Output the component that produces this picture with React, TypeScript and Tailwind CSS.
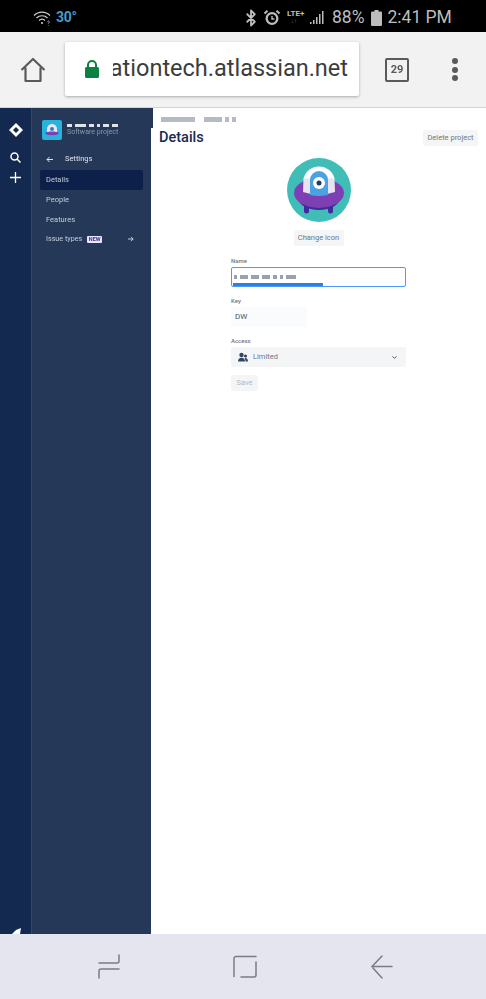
import * as React from 'react';
import { Bluetooth, ChevronDown } from 'lucide-react';

// smudges that stand in for the redacted text
function Smudge({ widths, color, h = 'h-[4px]' }: { widths: number[]; color: string; h?: string }) {
  return (
    <div className="flex items-center gap-[3px] blur-[0.7px]">
      {widths.map((w, i) => (
        <div key={i} className={h} style={{ width: w, backgroundColor: color }} />
      ))}
    </div>
  );
}

function StatusBar() {
  return (
    <div className="h-[32px] pt-[3px] bg-black flex items-center text-[#bdbdbd] shrink-0">
      <div className="ml-[33px] flex items-center gap-[4px] w-[200px]">
        <svg width="19" height="16" viewBox="0 0 19 16" fill="none" stroke="#d0d0d0" strokeWidth="1.2">
          <path d="M1 5.500C5.500 1 12.500 1 17 5.500" />
          <path d="M3.500 8C6.500 5 11.500 5 14.500 8" />
          <path d="M6 10.500C7.800 8.900 10.200 8.900 12 10.500" />
          <circle cx="9" cy="13" r="1" fill="#d0d0d0" stroke="none" />
          <path d="M14.500 11.500c1-1 2.500 0 1.600 1-.5.5-.8.7-.8 1.300M15.300 15v.6" strokeWidth="0.8" />
        </svg>
        <span className="text-[14px] font-bold text-[#3f9fd0] font-['Roboto',sans-serif] tracking-[-0.3px]">30°</span>
      </div>
      <div className="ml-[9px] flex items-center">
        <Bluetooth size={18} strokeWidth={2.4} className="text-[#bdbdbd]" />
        <svg width="18" height="18" viewBox="0 0 18 18" className="ml-[3px]">
          <circle cx="9" cy="9.500" r="6.500" fill="#bdbdbd" />
          <circle cx="9" cy="9.500" r="4.200" fill="#000" />
          <path d="M9 7v3h2.400" stroke="#bdbdbd" strokeWidth="1.400" fill="none" />
          <path d="M1.500 4.500 4.500 1.800M16.500 4.500 13.500 1.800" stroke="#bdbdbd" strokeWidth="2" />
        </svg>
        <div className="ml-[6px] w-[20px] flex flex-col items-start leading-none">
          <span className="text-[8px] font-bold font-['Roboto',sans-serif] leading-[8px]">LTE+</span>
          <span className="text-[6px] text-[#666] leading-[7px] ml-[4px]">↓↑</span>
        </div>
        <svg width="16" height="15" viewBox="0 0 16 15" fill="#bdbdbd" className="ml-[3px]">
          <rect x="0" y="12" width="1.500" height="2" />
          <rect x="3" y="10" width="1.500" height="4" />
          <rect x="6" y="7" width="1.500" height="7" />
          <rect x="9" y="4" width="1.500" height="10" />
          <rect x="12" y="1" width="1.500" height="13" />
        </svg>
        <span className="ml-[6px] text-[17.5px] font-['Roboto',sans-serif] leading-none">88%</span>
        <svg width="11" height="16" viewBox="0 0 11 16" fill="#bdbdbd" className="ml-[6px]">
          <rect x="3.500" y="0" width="4" height="2" />
          <rect x="0" y="1.500" width="11" height="14.500" rx="1" />
        </svg>
        <span className="ml-[6px] text-[17.5px] font-['Roboto',sans-serif] leading-none whitespace-nowrap">2:41 PM</span>
      </div>
    </div>
  );
}

function BrowserBar() {
  return (
    <div className="h-[76px] bg-[#f2f2f2] border-b border-[#d4d4d4] flex items-center shrink-0">
      <div className="w-[65px] flex justify-center">
        <svg width="26" height="26" viewBox="0 0 26 26" fill="none" stroke="#5a5a5a" strokeWidth="2.200" strokeLinejoin="round">
          <path d="M1.500 13 13 2l11.500 11M5.500 10.500V24h15V10.500" />
        </svg>
      </div>
      <div className="w-[294px] h-[54px] -mt-[1px] bg-white rounded-[2px] shadow-[0_1px_3px_rgba(0,0,0,0.3)] flex items-center overflow-hidden">
        <svg width="16" height="20" viewBox="0 0 16 20" className="ml-[19px] shrink-0">
          <path d="M4 9V6a4 4 0 0 1 8 0v3" fill="none" stroke="#0b8043" strokeWidth="2" />
          <rect x="1" y="8" width="14" height="11" rx="1.500" fill="#0b8043" />
        </svg>
        <div className="ml-[13px] w-[235px] overflow-hidden flex justify-end">
          <span className="text-[23.5px] text-[#3c3c3c] font-['Roboto',sans-serif] whitespace-nowrap">ationtech.atlassian.net</span>
        </div>
      </div>
      <div className="ml-[26px] w-[24px] h-[24px] border-[2.5px] border-[#5a5a5a] rounded-[2px] flex items-center justify-center">
        <span className="text-[11px] font-bold text-[#5a5a5a] font-['Roboto',sans-serif] leading-none">29</span>
      </div>
      <div className="ml-[43px] flex flex-col gap-[2.5px]">
        <div className="w-[6px] h-[6px] rounded-full bg-[#5a5a5a]" />
        <div className="w-[6px] h-[6px] rounded-full bg-[#5a5a5a]" />
        <div className="w-[6px] h-[6px] rounded-full bg-[#5a5a5a]" />
      </div>
    </div>
  );
}

function UfoIcon({ size }: { size: number }) {
  return (
    <svg width={size} height={size} viewBox="0 0 64 64">
      <circle cx="32" cy="32" r="32" fill="#41bdb8" />
      <path d="M17 48h5v5a2.500 2.500 0 0 1-5 0zM41 48h5v5a2.500 2.500 0 0 1-5 0z" fill="#3f2a9c" />
      <ellipse cx="32" cy="38" rx="22" ry="14" fill="#3f2a9c" />
      <ellipse cx="32" cy="35" rx="25" ry="15" fill="#7e3fb5" />
      <path d="M16.500 20H47.500L48 34q-16 5-32 0z" fill="#e9e3f1" />
      <path d="M16.500 20.500a16 16 0 0 1 31 0z" fill="#ffffff" />
      <path d="M23 37V22a9 9 0 0 1 18 0v15q-9 2-18 0z" fill="#4aa3e0" />
      <circle cx="32" cy="25" r="6" fill="#ffffff" />
      <circle cx="32" cy="25" r="2.500" fill="#1f3b68" />
    </svg>
  );
}

function Sidebar() {
  const items = ['People', 'Features'];
  return (
    <div className="flex h-full shrink-0">
      <div className="w-[31px] bg-[#14294f] flex flex-col items-center pt-[15px] relative">
        <svg width="14" height="14" viewBox="0 0 14 14">
          <path d="M7 0 14 7 7 14 0 7z" fill="#ffffff" />
          <path d="M7 4 10 7 7 10 4 7z" fill="#14294f" />
        </svg>
        <svg width="11" height="11" viewBox="0 0 11 11" fill="none" stroke="#ffffff" strokeWidth="1.500" className="mt-[15px]">
          <circle cx="4.500" cy="4.500" r="3.500" />
          <path d="M7 7l3.500 3.500" />
        </svg>
        <svg width="11" height="11" viewBox="0 0 11 11" fill="none" stroke="#ffffff" strokeWidth="1.300" className="mt-[9px]">
          <path d="M5.500 0v11M0 5.500h11" />
        </svg>
        {/* rocket peeking in at the bottom edge */}
        <svg width="9" height="6" viewBox="0 0 9 6" fill="#ffffff" className="absolute bottom-0 left-[12px]">
          <path d="M0 6 4 2 9 0 8 6z" />
        </svg>
      </div>
      <div className="w-[120px] bg-[#253858] border-l border-[#33476a] flex flex-col pl-[8px] pr-[8px] pt-[12px] font-['Roboto',sans-serif]">
        <div className="flex items-center gap-[4px] ml-[2px] h-[20px]">
          <div className="w-[20px] h-[20px] rounded-[2px] bg-[#29b3dc] flex items-center justify-center overflow-hidden shrink-0">
            <svg width="14" height="16" viewBox="0 0 14 16">
              <path d="M2 7a5 5 0 0 1 10 0v3H2z" fill="#e8e4f2" />
              <circle cx="7" cy="7" r="2" fill="#2f7fc0" />
              <path d="M0 11c2-2 12-2 14 0-1 3-13 3-14 0z" fill="#7e3fb5" />
            </svg>
          </div>
          <div className="flex flex-col ml-[1px]">
            <Smudge widths={[5, 11, 5, 3, 6, 6]} color="#dfe3ea" h="h-[3px]" />
            <span className="text-[7px] leading-[9px] mt-[1px] text-[#8a97ad] whitespace-nowrap">Software project</span>
          </div>
        </div>
        <div className="flex items-center h-[20px] mt-[9px] ml-[6px] text-[#dfe3ea]">
          <svg width="7" height="7" viewBox="0 0 7 7" fill="none" stroke="#dfe3ea" strokeWidth="1">
            <path d="M7 3.500H1M3.500 1 1 3.500 3.500 6" />
          </svg>
          <span className="ml-[12px] text-[7.5px]">Settings</span>
        </div>
        <div className="mt-[1px] h-[20px] w-[103px] bg-[#0c2049] rounded-[2px] flex items-center pl-[6px] text-[7.5px] text-[#c4ccda]">
          Details
        </div>
        {items.map((label) => (
          <div key={label} className="h-[19.7px] w-[103px] flex items-center pl-[6px] text-[7.5px] text-[#c4ccda]">
            {label}
          </div>
        ))}
        <div className="h-[20px] w-[103px] flex items-center pl-[6px] text-[7.2px] text-[#c4ccda]">
          <span>Issue types</span>
          <span className="ml-[5px] w-[15px] text-center bg-[#eae6ff] text-[#403294] text-[5.5px] font-bold rounded-[1px] leading-[7px]">NEW</span>
          <svg width="6" height="6" viewBox="0 0 7 7" fill="none" stroke="#dfe3ea" strokeWidth="1" className="ml-[26px]">
            <path d="M0 3.500h6M3.500 1 6 3.500 3.500 6" />
          </svg>
        </div>
      </div>
    </div>
  );
}

function Details() {
  return (
    <div className="flex-1 bg-white relative font-['Roboto',sans-serif]">
      {/* sliver of the sidebar that sticks out at the top */}
      <div className="absolute left-0 top-0 w-[2px] h-[20px] bg-[#253858]" />
      <div className="pl-[10px] pt-[9px] h-[15px] flex items-start gap-[9px]">
        <Smudge widths={[34]} color="#b5bac4" h="h-[5px]" />
        <Smudge widths={[18, 4, 4]} color="#b5bac4" h="h-[5px]" />
      </div>
      <div className="flex items-center justify-between pl-[8px] pr-[8px] mt-[7px]">
        <span className="text-[14.5px] leading-[16px] font-medium text-[#172b4d]">Details</span>
        <div className="h-[16px] w-[55px] bg-[#f4f5f7] rounded-[2px] flex items-center justify-center text-[7.5px] text-[#70757f] whitespace-nowrap">Delete project</div>
      </div>
      <div className="flex flex-col items-center mt-[12px]">
        <UfoIcon size={64} />
        <div className="mt-[8px] h-[16px] w-[50px] bg-[#f4f5f7] rounded-[2px] flex items-center justify-center text-[7.5px] text-[#70757f] whitespace-nowrap">Change icon</div>
      </div>
      <div className="ml-[80px] mt-[11px] w-[175px]">
        <div className="text-[6px] leading-[8px] font-medium text-[#70757f]">Name</div>
        <div className="mt-[2px] h-[20px] w-[175px] rounded-[2px] border-[1.5px] border-[#4c9aff] flex items-center pl-[2px] relative overflow-hidden">
          <Smudge widths={[3, 8, 8, 8, 4, 3, 10]} color="#9aa0ac" h="h-[4px]" />
          <div className="absolute left-[1px] bottom-0 w-[90px] h-[3px] bg-[#2f80dc]" />
        </div>
        <div className="mt-[10px] text-[6px] leading-[8px] font-medium text-[#70757f]">Key</div>
        <div className="mt-[2px] h-[20px] w-[76px] bg-[#fafbfc] rounded-[2px] flex items-center pl-[4px] text-[8px] text-[#4a5364]">DW</div>
        <div className="mt-[10px] text-[6px] leading-[8px] font-medium text-[#70757f]">Access</div>
        <div className="mt-[2px] h-[20px] w-[175px] bg-[#f4f5f7] rounded-[2px] flex items-center pl-[7px] pr-[8px]">
          <svg width="10" height="10" viewBox="0 0 10 10" fill="#344563">
            <circle cx="3.500" cy="3" r="2.200" />
            <circle cx="7.500" cy="4" r="1.600" />
            <path d="M0 9.500C0 7 1.500 5.800 3.500 5.800S7 7 7 9.500zM7.500 9.500c0-1.500-.3-2.600-1-3.300 2-.8 3.500.8 3.500 3.300z" />
          </svg>
          <span className="ml-[5px] text-[7.5px] text-[#70757f]">Limited</span>
          <ChevronDown size={7} strokeWidth={3} className="ml-auto text-[#344563]" />
        </div>
        <div className="mt-[8px] h-[16px] w-[27px] bg-[#f4f5f7] rounded-[2px] flex items-center justify-center text-[7.5px] text-[#b3bac5]">Save</div>
      </div>
    </div>
  );
}

function NavBar() {
  return (
    <div className="h-[65px] bg-[#e4e5ee] flex items-center pl-[98px] shrink-0">
      <svg width="22" height="25" viewBox="0 0 22 25" fill="none" stroke="#7b7c84" strokeWidth="1.500" strokeLinecap="round">
        <path d="M21 1v6a2 2 0 0 1-2 2H1" />
        <path d="M21 15H3a2 2 0 0 0-2 2v7" />
      </svg>
      <svg width="24" height="23" viewBox="0 0 24 23" fill="none" stroke="#7b7c84" strokeWidth="1.500" strokeLinecap="round" className="ml-[113px]">
        <path d="M23 1.500H3a2 2 0 0 0-2 2v18" />
        <path d="M23 7v13a2 2 0 0 1-2 2h-13" />
      </svg>
      <svg width="22" height="24" viewBox="0 0 22 24" fill="none" stroke="#7b7c84" strokeWidth="1.500" strokeLinecap="round" className="ml-[114px]">
        <path d="M21 11.500H1L11 1M2 13l9 10" />
      </svg>
    </div>
  );
}

export default function App() {
  return (
    <div className="w-[486px] h-[999px] flex flex-col overflow-hidden blur-[0.4px]">
      <StatusBar />
      <BrowserBar />
      <div className="flex flex-1 min-h-0">
        <Sidebar />
        <Details />
      </div>
      <NavBar />
    </div>
  );
}
